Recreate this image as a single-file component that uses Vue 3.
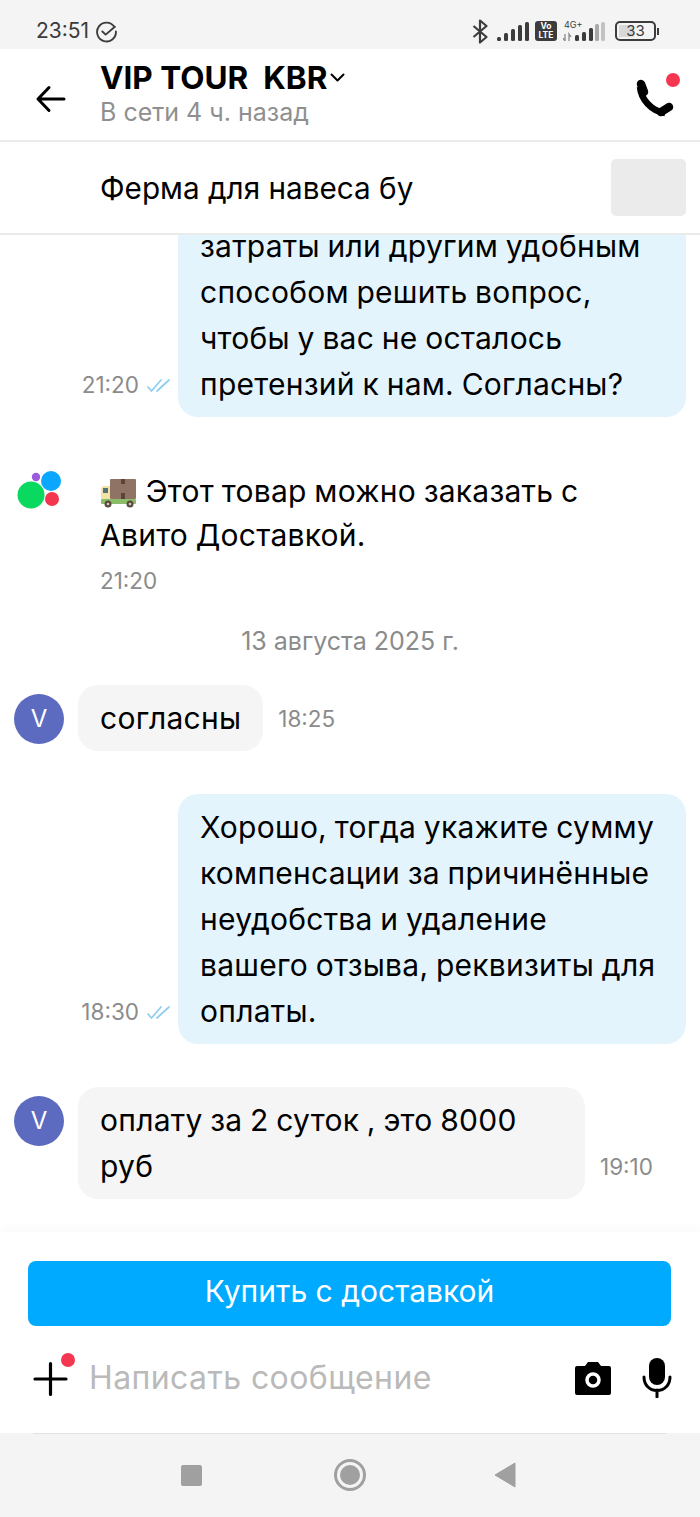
<script setup>
const outgoing = [
  {
    id: 1,
    time: '21:20',
    lines: ['затраты или другим удобным', 'способом решить вопрос,', 'чтобы у вас не осталось', 'претензий к нам. Согласны?'],
  },
  {
    id: 2,
    time: '18:30',
    lines: ['Хорошо, тогда укажите сумму', 'компенсации за причинённые', 'неудобства и удаление', 'вашего отзыва, реквизиты для', 'оплаты.'],
  },
];
const bars = [
  { x: 0, h: 4 },
  { x: 7, h: 8 },
  { x: 14, h: 12 },
  { x: 21, h: 16 },
  { x: 28, h: 19 },
];
</script>

<template>
  <div class="screen">
    <div class="status">
      <div class="status__left">
        <span>23:51</span>
        <svg width="23" height="23" viewBox="0 0 22 22" fill="none" stroke="#3c3c3c" stroke-width="1.8">
          <path d="M18.5 6.5A9 9 0 1 0 20 11" stroke-linecap="round" />
          <path d="M7 11l3.2 3L19 6.5" stroke-linecap="round" stroke-linejoin="round" />
        </svg>
      </div>
      <div class="status__right">
        <svg width="16" height="25" viewBox="0 0 16 25" fill="none" stroke="#3c3c3c" stroke-width="2.2">
          <path d="M1.5 7l13 11-6.500 5.500V1.500l6.500 5.500-13 11" stroke-linejoin="round" />
        </svg>
        <svg class="signal" width="32" height="20" viewBox="0 0 32 20" fill="#3c3c3c">
          <rect v-for="b in bars" :key="b.x" :x="b.x" :y="20 - b.h" width="4" :height="b.h" rx="1.500" />
        </svg>
        <div class="volte">Vo<br />LTE</div>
        <div class="net">
          <span class="net__label">4G+</span>
          <svg class="net__bars" width="44" height="20" viewBox="0 0 44 20">
            <path d="M2 13v7M0 17l2 3M6 20v-7l2 3" stroke="#8a8a8a" stroke-width="1.300" fill="none" />
            <rect x="12" y="14" width="4" height="6" rx="1.500" fill="#3c3c3c" />
            <rect x="19" y="11" width="4" height="9" rx="1.500" fill="#3c3c3c" />
            <rect x="26" y="7" width="4" height="13" rx="1.500" fill="#3c3c3c" />
            <rect x="32" y="3" width="4" height="17" rx="1.500" fill="#a9a9a9" />
            <rect x="38" y="1" width="4" height="19" rx="1.500" fill="#c2c2c2" />
          </svg>
        </div>
        <div class="battery">
          <div class="battery__body"><span class="battery__level"></span><span class="battery__value">33</span></div>
          <span class="battery__cap"></span>
        </div>
      </div>
    </div>

    <header class="header">
      <svg class="header__back" width="32" height="28" viewBox="0 0 32 28" fill="none" stroke="#000" stroke-width="3" stroke-linecap="round" stroke-linejoin="round">
        <path d="M29 14H3M14 2.500L3 14l11 11.500" />
      </svg>
      <div class="header__info">
        <div class="header__name">
          <span>VIP TOUR&nbsp; KBR</span>
          <svg width="15" height="9" viewBox="0 0 15 9" fill="none" stroke="#000" stroke-width="2" stroke-linecap="round" stroke-linejoin="round">
            <path d="M1.500 1.500l6 6 6-6" />
          </svg>
        </div>
        <div class="header__seen">В сети 4 ч. назад</div>
      </div>
      <svg class="header__call" width="60" height="50" viewBox="0 0 60 50" fill="none">
        <path d="M12 17c1 12 11 24 25 26" stroke="#000" stroke-width="6.500" />
        <path d="M13 14l3 8M33 42l8-5" stroke="#000" stroke-width="8.500" stroke-linecap="round" />
        <circle cx="45" cy="10" r="7" fill="#f4374f" />
      </svg>
    </header>

    <section class="product">
      <div class="product__title">Ферма для навеса бу</div>
      <div class="product__image"></div>
    </section>

    <main class="messages">
      <div class="row row--out">
        <span class="time">{{ outgoing[0].time }}</span>
        <svg class="ticks" width="24" height="14" viewBox="0 0 24 14" fill="none" stroke="#8ccdf0" stroke-width="1.700" stroke-linecap="round" stroke-linejoin="round">
          <path d="M1 9l3.500 4L14 2M10 13L22 2" />
        </svg>
        <div class="bubble bubble--out">
          <div v-for="line in outgoing[0].lines" :key="line">{{ line }}</div>
        </div>
      </div>

      <div class="system">
        <svg class="system__logo" width="46" height="40" viewBox="0 0 46 40">
          <circle cx="15" cy="25" r="13.500" fill="#0ad95f" />
          <circle cx="35" cy="11" r="10" fill="#0aa6ff" />
          <circle cx="36" cy="29" r="7" fill="#f4374f" />
          <circle cx="20" cy="7" r="4.200" fill="#9a5cdc" />
        </svg>
        <div>
          <div class="system__text">
            <svg class="truck" width="36" height="30" viewBox="0 0 36 30">
              <rect x="10" y="1" width="26" height="20" rx="1" fill="#8f7465" />
              <rect x="21" y="1" width="4" height="5" fill="#5c4538" />
              <rect x="21" y="15" width="4" height="6" fill="#5c4538" />
              <path d="M1 12c0-2 1-4 3-4h6v13H1z" fill="#f1e3a6" />
              <rect x="3" y="10" width="5" height="5" fill="#55717d" />
              <rect x="1" y="21" width="35" height="5" rx="1" fill="#8bbd68" />
              <circle cx="8" cy="26" r="3.500" fill="#5b4a3f" />
              <circle cx="8" cy="26" r="1.300" fill="#d8cbb8" />
              <circle cx="30" cy="26" r="3.500" fill="#5b4a3f" />
              <circle cx="30" cy="26" r="1.300" fill="#d8cbb8" />
            </svg>
            Этот товар можно заказать с<br />Авито Доставкой.
          </div>
          <div class="time system__time">21:20</div>
        </div>
      </div>

      <div class="date">13 августа 2025 г.</div>

      <div class="row row--in">
        <div class="avatar">V</div>
        <div class="bubble bubble--in">согласны</div>
        <span class="time">18:25</span>
      </div>

      <div class="row row--out row--gap">
        <span class="time">{{ outgoing[1].time }}</span>
        <svg class="ticks" width="24" height="14" viewBox="0 0 24 14" fill="none" stroke="#8ccdf0" stroke-width="1.700" stroke-linecap="round" stroke-linejoin="round">
          <path d="M1 9l3.500 4L14 2M10 13L22 2" />
        </svg>
        <div class="bubble bubble--out">
          <div v-for="line in outgoing[1].lines" :key="line">{{ line }}</div>
        </div>
      </div>

      <div class="row row--in row--gap">
        <div class="avatar">V</div>
        <div class="bubble bubble--in">оплату за 2 суток , это 8000 руб</div>
        <span class="time">19:10</span>
      </div>
    </main>

    <footer class="composer">
      <button class="composer__buy">Купить с доставкой</button>
      <div class="composer__input">
        <svg class="composer__plus" width="44" height="44" viewBox="0 0 44 44" fill="none">
          <path d="M2 26h31M17.500 10.500v31" stroke="#000" stroke-width="3.200" stroke-linecap="round" />
          <circle cx="35" cy="7" r="7" fill="#f4374f" />
        </svg>
        <span class="composer__placeholder">Написать сообщение</span>
        <svg width="36" height="34" viewBox="0 0 36 34">
          <path d="M2 5h8l3-4h10l3 4h8a2 2 0 0 1 2 2v25a2 2 0 0 1-2 2H2a2 2 0 0 1-2-2V7a2 2 0 0 1 2-2z" fill="#000" />
          <circle cx="18" cy="19" r="6" fill="none" stroke="#fff" stroke-width="3.500" />
        </svg>
        <svg class="composer__mic" width="30" height="40" viewBox="0 0 30 40" fill="none">
          <rect x="7" y="0" width="16" height="27" rx="8" fill="#000" />
          <path d="M2 19c0 8 5.500 13.500 13 13.500S28 27 28 19M15 32v7" stroke="#000" stroke-width="3" stroke-linecap="round" />
        </svg>
      </div>
    </footer>

    <nav class="nav">
      <span class="nav__square"></span>
      <span class="nav__home"><span></span></span>
      <svg class="nav__back" width="22" height="26" viewBox="0 0 22 26"><path d="M21 1v24L1 13z" fill="#a0a0a0" stroke="#a0a0a0" stroke-linejoin="round" /></svg>
    </nav>
  </div>
</template>

<style>
html,
body {
  margin: 0;
  background: #fff;
}
</style>

<style scoped>
.screen {
  display: flex;
  flex-direction: column;
  width: 700px;
  height: 1517px;
  overflow: hidden;
  background: #fff;
  color: #000;
  font-family: Inter, 'Noto Sans', sans-serif;
  font-size: 30px;
  line-height: 46px;
}
.status {
  display: flex;
  justify-content: space-between;
  align-items: center;
  flex: none;
  box-sizing: border-box;
  height: 49px;
  padding: 13px 41px 0 36px;
  background: #f4f4f4;
  color: #3c3c3c;
}
.status__left {
  display: flex;
  align-items: center;
  gap: 6px;
  font-size: 21px;
  line-height: 30px;
}
.status__right {
  display: flex;
  align-items: center;
}
.signal {
  margin-left: 9px;
}
.volte {
  box-sizing: border-box;
  width: 22px;
  height: 20px;
  margin-left: 6px;
  border-radius: 3px;
  background: #3c3c3c;
  color: #fff;
  font-size: 8.500px;
  font-weight: 700;
  line-height: 9px;
  text-align: center;
  padding-top: 1px;
}
.net {
  position: relative;
  margin-left: 6px;
  height: 20px;
}
.net__bars {
  display: block;
}
.net__label {
  position: absolute;
  left: 1px;
  top: -1px;
  font-size: 9px;
  line-height: 10px;
}
.battery {
  display: flex;
  align-items: center;
  margin-left: 8px;
}
.battery__body {
  position: relative;
  box-sizing: border-box;
  width: 41px;
  height: 20px;
  padding: 2px;
  border: 2px solid #3c3c3c;
  border-radius: 5px;
}
.battery__level {
  display: block;
  width: 45%;
  height: 100%;
  background: #d8d8d8;
}
.battery__value {
  position: absolute;
  inset: 0;
  font-size: 15px;
  line-height: 16px;
  text-align: center;
}
.battery__cap {
  width: 2px;
  height: 7px;
  margin-left: 1px;
  background: #3c3c3c;
}
.header {
  display: flex;
  align-items: center;
  flex: none;
  box-sizing: border-box;
  height: 93px;
  border-bottom: 2px solid #ebebeb;
  padding: 0 12px 0 35px;
}
.header__back {
  flex: none;
  margin-top: 9px;
}
.header__info {
  flex: 1;
  margin-left: 33px;
}
.header__name {
  display: flex;
  align-items: center;
  gap: 3px;
  font-size: 31.500px;
  font-weight: 700;
  line-height: 34px;
}
.header__seen {
  color: #8f8f8f;
  font-size: 25px;
  line-height: 34px;
}
.header__call {
  flex: none;
}
.product {
  display: flex;
  justify-content: space-between;
  align-items: center;
  flex: none;
  box-sizing: border-box;
  height: 93px;
  border-bottom: 2px solid #ebebeb;
  padding: 0 14px 0 100px;
}
.product__title {
  font-size: 29.700px;
}
.product__image {
  width: 75px;
  height: 57px;
  border-radius: 5px;
  background: #ebebeb;
}
.messages {
  display: flex;
  flex-direction: column;
  justify-content: flex-end;
  flex: 1;
  min-height: 0;
  overflow: hidden;
  padding-bottom: 33px;
}
.row {
  display: flex;
  flex: none;
}
.row--out {
  justify-content: flex-end;
  align-items: flex-end;
  padding-right: 14px;
}
.row--in {
  align-items: flex-start;
  padding-left: 14px;
}
.row--gap {
  margin-top: 43px;
}
.bubble {
  box-sizing: border-box;
  padding: 10px 22px;
  border-radius: 20px;
  letter-spacing: 0.25px;
  word-spacing: -1px;
}
.bubble--out {
  width: 508px;
  margin-left: 7px;
  background: #e4f4fd;
  white-space: nowrap;
}
.bubble--in {
  max-width: 507px;
  margin-left: 14px;
  background: #f5f5f5;
}
.time {
  color: #8b8b8b;
  font-size: 22.500px;
  line-height: 30px;
}
.row--out .time {
  margin-bottom: 17px;
}
.ticks {
  margin: 0 0 25px 8px;
}
.row--in .time {
  align-self: flex-end;
  margin: 0 0 17px 15px;
}
.system {
  display: flex;
  flex: none;
  margin-top: 52px;
  padding-left: 16px;
}
.system__logo {
  flex: none;
  margin-top: 1px;
  margin-right: 38px;
}
.system__text {
  line-height: 44px;
  letter-spacing: 0.25px;
  word-spacing: -1px;
}
.truck {
  vertical-align: -6px;
  margin-right: 2px;
}
.system__time {
  margin-top: 9px;
}
.date {
  flex: none;
  margin: 30px 0 29px;
  color: #8b8b8b;
  font-size: 25px;
  line-height: 30px;
  text-align: center;
}
.avatar {
  display: flex;
  justify-content: center;
  align-items: center;
  flex: none;
  width: 50px;
  height: 50px;
  margin-top: 9px;
  border-radius: 50%;
  background: #5c6bc0;
  color: #fff;
  font-size: 24px;
}
.composer {
  flex: none;
  box-sizing: border-box;
  height: 201px;
  padding-top: 29px;
  box-shadow: 0 -6px 8px rgba(0, 0, 0, 0.02);
  position: relative;
}
.composer__buy {
  display: block;
  width: 643px;
  height: 65px;
  margin-left: 28px;
  padding: 0 0 5px;
  border: 0;
  border-radius: 8px;
  background: #00aaff;
  color: #fff;
  font: inherit;
}
.composer__input {
  display: flex;
  align-items: center;
  box-sizing: border-box;
  height: 107px;
  padding: 0 28px 4px 33px;
}
.composer__plus {
  flex: none;
  margin-top: -6px;
}
.composer__placeholder {
  flex: 1;
  margin-left: 12px;
  color: #bababa;
  font-size: 32px;
  letter-spacing: 0.4px;
}
.composer__mic {
  margin-left: 31px;
}
.nav {
  display: flex;
  justify-content: center;
  align-items: center;
  gap: 132px;
  flex: none;
  height: 84px;
  background: #f4f4f4;
  position: relative;
}
.nav::before {
  content: '';
  position: absolute;
  top: 0;
  left: 33px;
  right: 34px;
  height: 1px;
  background: #e2e2e2;
}
.nav__square {
  width: 21px;
  height: 21px;
  border-radius: 2px;
  background: #a0a0a0;
}
.nav__home {
  display: flex;
  justify-content: center;
  align-items: center;
  box-sizing: border-box;
  width: 32px;
  height: 32px;
  border: 3px solid #a0a0a0;
  border-radius: 50%;
}
.nav__home span {
  width: 20px;
  height: 20px;
  border-radius: 50%;
  background: #a0a0a0;
}
.nav__back {
  margin: 0 4px 0 -4px;
}
</style>
